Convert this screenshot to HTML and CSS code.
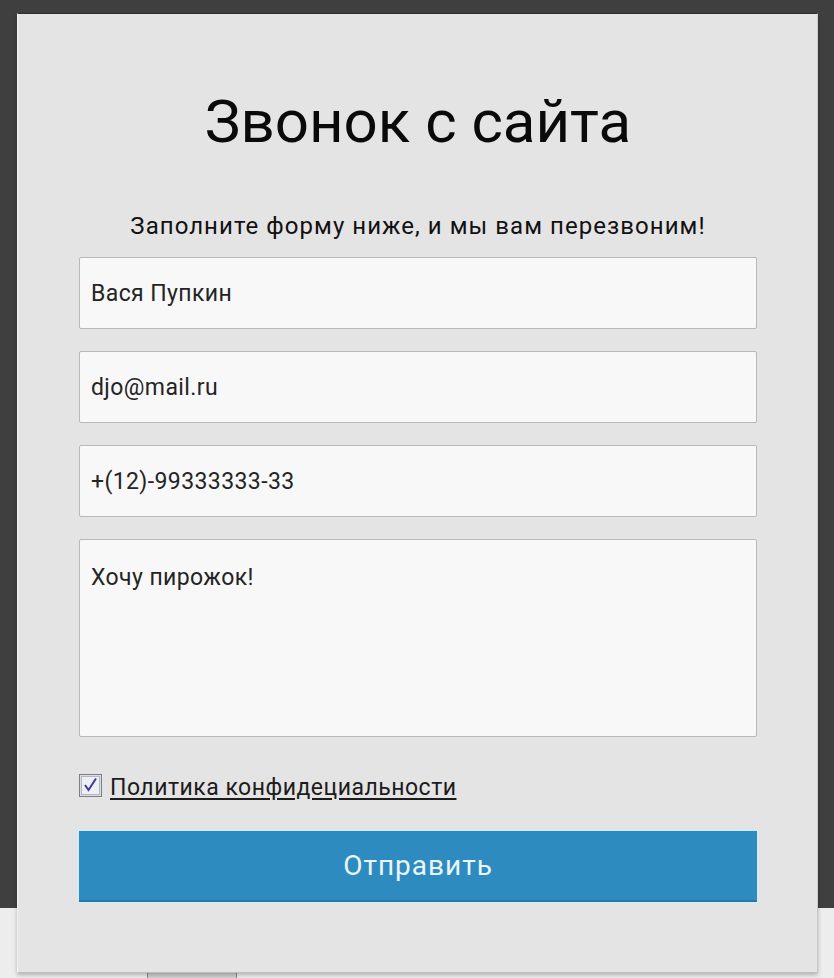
FILE: index.html
```html
<!DOCTYPE html>
<html lang="ru">
<head>
<meta charset="utf-8">
<title>Звонок с сайта</title>
<link rel="stylesheet" href="styles.css">
</head>
<body>
<div class="backdrop">
  <div class="backdrop-dark"></div>
  <div class="backdrop-light">
    <div class="peek"></div>
  </div>
</div>
<div class="modal">
  <h1 class="title">Звонок с сайта</h1>
  <p class="subtitle">Заполните форму ниже, и мы вам перезвоним!</p>
  <form class="form">
    <div class="field">Вася Пупкин</div>
    <div class="field">djo@mail.ru</div>
    <div class="field">+(12)-99333333-33</div>
    <div class="field field-area">Хочу пирожок!</div>
    <label class="agree">
      <span class="check">
        <svg viewBox="0 0 23 23" width="23" height="23">
          <rect x="0.5" y="0.5" width="22" height="22" fill="#dcdde6" stroke="#7d7d85"/>
          <rect x="2.5" y="2.5" width="18" height="18" fill="#eef0f6" stroke="#b4b6c6"/>
          <path d="M6 11 L9.5 16 L17 4.5" fill="none" stroke="#3c3a9a" stroke-width="2"/>
        </svg>
      </span>
      <span class="agree-text">Политика конфидециальности</span>
    </label>
    <div class="submit">Отправить</div>
  </form>
</div>
</body>
</html>
```
FILE: styles.css
```css
html, body {
  margin: 0;
  padding: 0;
}
body {
  width: 834px;
  height: 978px;
  overflow: hidden;
  font-family: Roboto, "Noto Sans", sans-serif;
  background: #ececec;
}
.backdrop {
  display: flex;
  flex-direction: column;
  height: 978px;
}
.backdrop-dark {
  height: 909px;
  background: #403f40;
}
.backdrop-light {
  flex: 1;
  background: #ededed;
  padding-left: 147px;
  padding-top: 63px;
}
.peek {
  width: 88px;
  height: 6px;
  border: 1px solid #8a8a8a;
  border-bottom: none;
  background: #d0d0d0;
  border-radius: 3px 3px 0 0;
}
.modal {
  position: absolute;
  left: 17px;
  top: 13px;
  width: 801px;
  height: 960px;
  box-sizing: border-box;
  background: #e5e4e5;
  border-top: 1px solid #2e2d2e;
  border-left: 1px solid #f3f3f3;
  border-right: 1px solid #c9c9c9;
  border-bottom: 1px solid #bdbdbd;
  box-shadow: 0 2px 4px rgba(0,0,0,0.25);
  padding: 72px 60px 0 61px;
  color: #111;
}
.title {
  margin: 0;
  font-size: 60px;
  line-height: 72px;
  font-weight: 400;
  text-align: center;
  color: #0a0a0a;
}
.subtitle {
  margin: 54px 0 0;
  font-size: 24px;
  line-height: 28px;
  letter-spacing: 1.05px;
  text-align: center;
  color: #111;
}
.form {
  margin-top: 17px;
  display: flex;
  flex-direction: column;
  gap: 22px;
}
.field {
  height: 72px;
  box-sizing: border-box;
  border: 1px solid #b9b9b9;
  border-radius: 2px;
  background: #f8f8f8;
  padding: 0 11px;
  display: flex;
  align-items: center;
  font-size: 23px;
  letter-spacing: 0.4px;
  color: #242424;
}
.field-area {
  height: 198px;
  align-items: flex-start;
  padding-top: 24px;
}
.agree {
  display: flex;
  align-items: center;
  gap: 8px;
  margin-top: 15px;
  height: 26px;
}
.check {
  display: block;
  width: 23px;
  height: 23px;
  margin-top: -4px;
}
.check svg {
  display: block;
}
.agree-text {
  font-size: 23px;
  letter-spacing: 0.5px;
  color: #1c1c1c;
  text-decoration: underline;
  text-underline-offset: 3px;
}
.submit {
  margin-top: 9px;
  height: 71px;
  box-sizing: border-box;
  background: #2e8bc0;
  border-bottom: 2px solid #2577a6;
  box-shadow: 0 0 0 1px #cdeefb;
  display: flex;
  align-items: center;
  justify-content: center;
  font-size: 28px;
  letter-spacing: 1px;
  color: #eaf6fc;
}
```
